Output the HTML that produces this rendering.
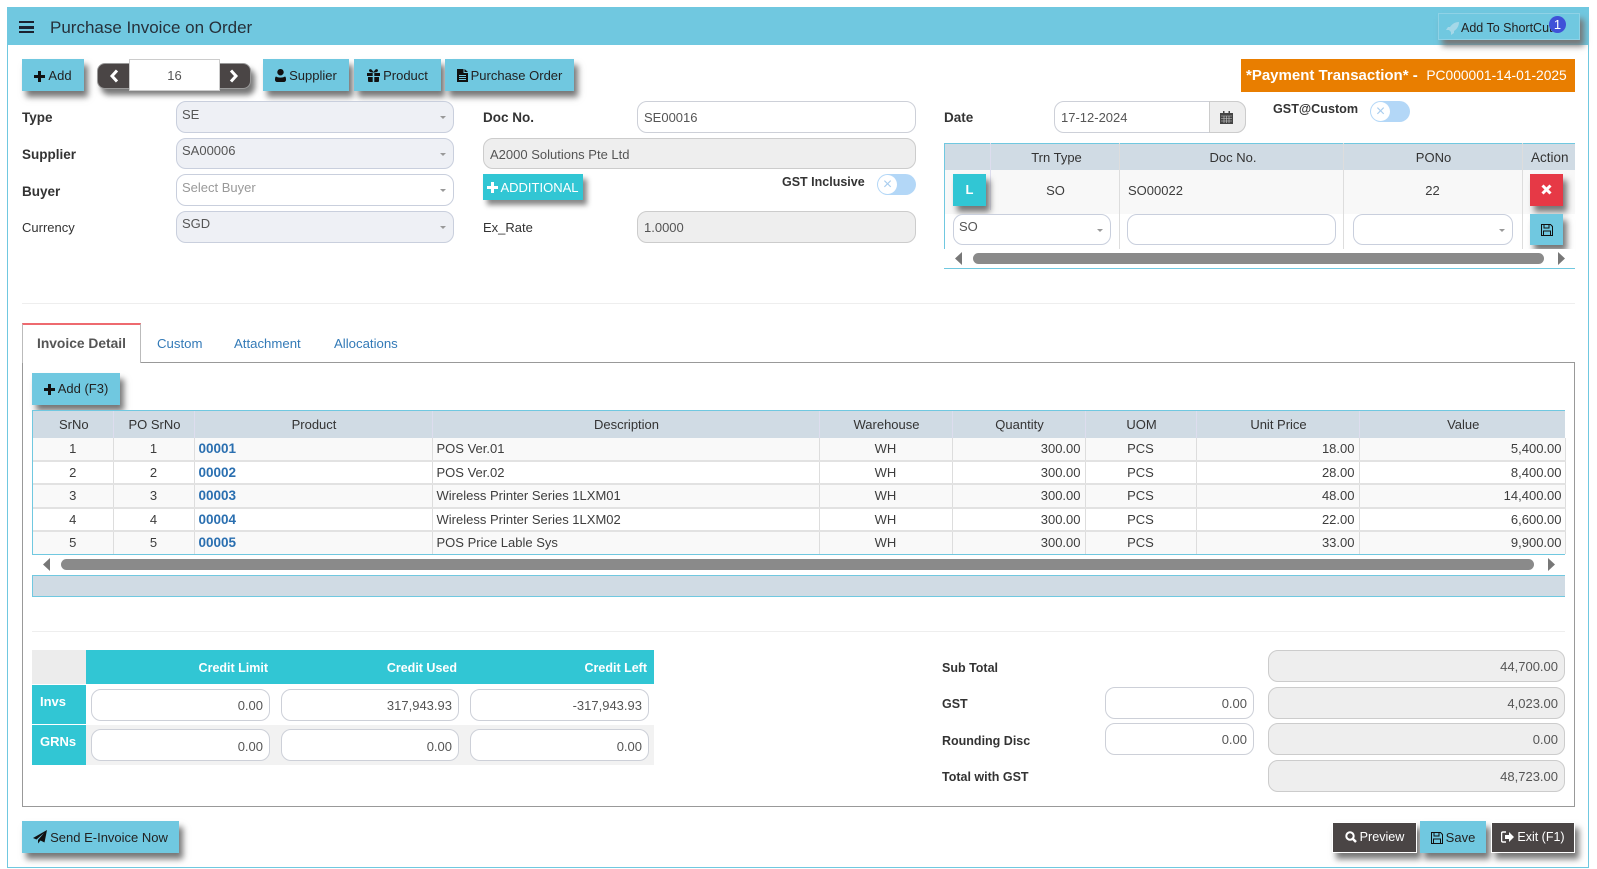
<!DOCTYPE html>
<html><head><meta charset="utf-8"><title>Purchase Invoice on Order</title>
<style>
*{box-sizing:border-box}
html,body{margin:0;padding:0;width:1597px;height:869px;overflow:hidden;background:#fff}
body{font-family:"Liberation Sans",sans-serif;font-size:13px;color:#3d3d3d;position:relative}
.a{position:absolute;white-space:nowrap}
.btn{position:absolute;background:#70c8e0;color:#222;height:32px;line-height:34px;text-align:center;font-size:13px;box-shadow:4px 6px 6px #777;white-space:nowrap}
.btn svg{vertical-align:-2px;margin-right:3px}
.dk{background:#4a4545;color:#fff;border:1px solid #fff}
.f{position:absolute;border:1px solid #cdd0d8;border-radius:10px;background:#fff;height:32px;line-height:32px;padding:0 6px;font-size:13px;color:#555;white-space:nowrap}
.s{background:#eef0f5;border-color:#c9cfdd;line-height:26px;padding-left:5px}
.s:after,.w:after{content:"";position:absolute;right:7px;top:14px;border:3px solid transparent;border-top:3px solid #999;border-bottom:0}
.w{line-height:26px;padding-left:5px;border-color:#c9cfdd}
.g{background:#eee;border-color:#ccc}
.r{text-align:right}
.b{font-weight:bold;color:#333;font-size:13.5px}
.l{height:20px;line-height:20px}
table{border-collapse:collapse;table-layout:fixed;position:absolute}
th{background:#d0dbe4;font-weight:normal;color:#333;border-right:1px solid #dde;font-size:13px;height:27px;padding:0 0 0 2px}
#g td{border-right:1px solid #ddd;border-bottom:2px solid #e2e2e2;padding:0 4px;font-size:13px;height:23px;color:#3d3d3d;line-height:20px}
#g tr:nth-child(even) td{background:#f9f9f9}
#g tr:last-child td{border-bottom:0}
#g td.ri{padding-right:3px}
#g td:nth-child(6),#g td:nth-child(8){padding-right:4px}
#g td:last-child{padding-right:3px}
.c{text-align:center}.ri{text-align:right}
#g td.c{padding:0}
#g a{color:#2a6fb0;font-weight:bold;font-size:13.5px}
.tab{position:absolute;top:334px;color:#337ab7;font-size:13.2px;line-height:20px}
.sh{box-shadow:4px 6px 6px #777}
.cr{font-weight:bold;color:#fff;font-size:12.5px;line-height:20px}
.t{color:#333;font-weight:bold;font-size:12.5px}
</style></head><body>
<!-- frame -->
<div class="a" style="left:7px;top:7px;width:1582px;height:861px;border:1px solid #70c8e0"></div>
<div class="a" style="left:7px;top:7px;width:1582px;height:38px;background:#70c8e0"></div>
<div class="a" style="left:19px;top:21px;width:15px;height:12px;border-top:2.5px solid #1c2230;border-bottom:2.5px solid #1c2230"></div>
<div class="a" style="left:19px;top:26px;width:15px;height:2.5px;background:#1c2230"></div>
<div class="a" style="left:50px;top:17px;line-height:22px;font-size:17px;color:#26303a">Purchase Invoice on Order</div>
<!-- shortcut -->
<div class="a sh" style="left:1438px;top:13px;width:142px;height:27px;background:#70c8e0;border:1px solid #8fd2e6"></div>
<svg class="a" style="left:1446px;top:21px" width="14" height="14" viewBox="0 0 14 14"><path d="M13 1C9 1 6 3 4 6L2 6 0 9l3 0 2 2 0 3 3-2 0-2c3-2 5-5 5-9zM10 3a1 1 0 1 0 .1 0z" fill="#a5d8e8"/></svg>
<div class="a" style="left:1461px;top:18px;line-height:20px;font-size:12.5px;color:#222">Add To ShortCut</div>
<div class="a" style="left:1549px;top:16px;width:17px;height:17px;border-radius:50%;background:#3f51d8;color:#fff;text-align:center;line-height:17px;font-size:13px">1</div>
<!-- top buttons -->
<div class="btn" style="left:22px;top:59px;width:62px"><svg width="11" height="11" viewBox="0 0 11 11"><path d="M4 0h3v4h4v3H7v4H4V7H0V4h4z" fill="#111"/></svg>Add</div>
<div class="a sh" style="left:97px;top:63px;width:154px;height:26px;background:#4a4545;border-radius:8px;border:1px solid #999"></div>
<svg class="a" style="left:109px;top:69px" width="10" height="14" viewBox="0 0 10 14"><path d="M8 1.500 3 7l5 5.500" fill="none" stroke="#fff" stroke-width="3"/></svg>
<svg class="a" style="left:229px;top:69px" width="10" height="14" viewBox="0 0 10 14"><path d="M2 1.500 7 7l-5 5.500" fill="none" stroke="#fff" stroke-width="3"/></svg>
<div class="a c" style="left:129px;top:59px;width:91px;height:32px;background:#fff;border:1px solid #ccc;line-height:32px;color:#555">16</div>
<div class="btn" style="left:263px;top:59px;width:86px"><svg width="11" height="13" viewBox="0 0 11 13"><path d="M5.500 0a3.200 3.200 0 1 1-.01 0zM1 7.500c2.500 1.500 6.500 1.500 9 0 1 .5 1 2 1 3.500 0 1-1 2-2 2H2c-1 0-2-1-2-2 0-1.500 0-3 1-3.500z" fill="#111"/></svg>Supplier</div>
<div class="btn" style="left:354px;top:59px;width:87px"><svg width="13" height="13" viewBox="0 0 13 13"><path d="M0 4h5.700v3H0zM7.300 4H13v3H7.300zM1 8h4.700v5H2a1 1 0 0 1-1-1zM7.300 8H12v4a1 1 0 0 1-1 1H7.300zM6.500 3.500C4 3.500 2 3 2 1.500 2 .3 3.500-.3 4.500.5L6.500 3l2-2.500c1-.8 2.500-.2 2.500 1C11 3 9 3.500 6.500 3.500z" fill="#111"/></svg>Product</div>
<div class="btn" style="left:445px;top:59px;width:129px"><svg width="11" height="13" viewBox="0 0 11 13"><path d="M0 0h6.500v4H11v9H0zM7.500 0 11 3H7.500zM2 6v1h7V6zM2 8v1h7V8zM2 10v1h7v-1z" fill="#111" fill-rule="evenodd"/></svg>Purchase Order</div>
<!-- orange -->
<div class="a" style="left:1241px;top:59px;width:334px;height:33px;background:#e97e00;color:#fff;line-height:34px;padding-left:5px"><span style="font-weight:bold;font-size:15px">*Payment Transaction* -</span> <span style="font-size:13.8px;margin-left:5px">PC000001-14-01-2025</span></div>
<!-- left form -->
<div class="a l b" style="left:22px;top:108px">Type</div>
<div class="a l b" style="left:22px;top:145px">Supplier</div>
<div class="a l b" style="left:22px;top:182px">Buyer</div>
<div class="a l" style="left:22px;top:218px;color:#333">Currency</div>
<div class="f s" style="left:176px;top:101px;width:278px">SE</div>
<div class="f s" style="left:176px;top:138px;width:278px;height:31px;line-height:24px">SA00006</div>
<div class="f w" style="left:176px;top:174px;width:278px;color:#999">Select Buyer</div>
<div class="f s" style="left:176px;top:211px;width:278px;line-height:24px">SGD</div>
<div class="a l b" style="left:483px;top:108px">Doc No.</div>
<div class="f" style="left:637px;top:101px;width:279px">SE00016</div>
<div class="f g" style="left:483px;top:138px;width:433px;height:31px;line-height:31px">A2000 Solutions Pte Ltd</div>
<div class="a c" style="left:483px;top:174px;width:100px;height:26px;line-height:27px;background:#31c6d4;color:#fff;box-shadow:4px 5px 5px #888"><svg width="11" height="11" viewBox="0 0 11 11" style="vertical-align:-1px;margin-right:2px"><path d="M4 0h3v4h4v3H7v4H4V7H0V4h4z" fill="#fff"/></svg>ADDITIONAL</div>
<div class="a l b" style="left:782px;top:172px;font-size:12.5px">GST Inclusive</div>
<div class="a" style="left:877px;top:174px;width:39px;height:21px;background:#b3d7f7;border-radius:11px"></div>
<div class="a c" style="left:878px;top:175px;width:19px;height:19px;background:#fff;border-radius:50%;color:#a9cdee;line-height:19px;font-size:16px">×</div>
<div class="a l" style="left:483px;top:218px;color:#333">Ex_Rate</div>
<div class="f g" style="left:637px;top:211px;width:279px">1.0000</div>
<!-- date -->
<div class="a l b" style="left:944px;top:108px">Date</div>
<div class="f" style="left:1054px;top:101px;width:192px">17-12-2024</div>
<div class="a" style="left:1209px;top:101px;width:37px;height:32px;background:#eee;border:1px solid #ccc;border-radius:0 10px 10px 0"></div>
<svg class="a" style="left:1220px;top:111px" width="13" height="13" viewBox="0 0 13 13"><path d="M0 2h13v11H0zM3 0h1.500v3H3zM8.500 0H10v3H8.500z" fill="#444"/><path d="M1 5h11M1 7.500h11M1 10h11M4 5v7M6.500 5v7M9 5v7" stroke="#ccc" stroke-width=".6"/></svg>
<div class="a l b" style="left:1273px;top:99px;font-size:12.6px">GST@Custom</div>
<div class="a" style="left:1370px;top:101px;width:40px;height:21px;background:#b3d7f7;border-radius:11px"></div>
<div class="a c" style="left:1371px;top:102px;width:19px;height:19px;background:#fff;border-radius:50%;color:#a9cdee;line-height:19px;font-size:16px">×</div>
<!-- upper table -->
<div class="a" style="left:944px;top:143px;width:631px;height:27px;background:#d0dbe4;border-top:1px solid #70c8e0;border-left:1px solid #70c8e0"></div>
<div class="a" style="left:944px;top:170px;width:631px;height:79px;background:linear-gradient(#f8f8f8 0,#f8f8f8 44px,#fff 44px);border-left:1px solid #70c8e0"></div>
<div class="a" style="left:990px;top:143px;width:1px;height:67px;background:#dde"></div>
<div class="a" style="left:1119px;top:143px;width:1px;height:106px;background:#ddd"></div>
<div class="a" style="left:1343px;top:143px;width:1px;height:106px;background:#ddd"></div>
<div class="a" style="left:1522px;top:143px;width:1px;height:106px;background:#ddd"></div>
<div class="a c" style="left:992px;top:148px;width:129px;color:#333;line-height:20px">Trn Type</div>
<div class="a c" style="left:1121px;top:148px;width:224px;color:#333;line-height:20px">Doc No.</div>
<div class="a c" style="left:1344px;top:148px;width:179px;color:#333;line-height:20px">PONo</div>
<div class="a" style="left:1531px;top:148px;color:#333;line-height:20px;font-size:13.5px">Action</div>
<div class="a c sh" style="left:953px;top:174px;width:33px;height:32px;background:#31c6d4;color:#fff;font-weight:bold;line-height:31px">L</div>
<div class="a c" style="left:991px;top:181px;width:129px;line-height:20px">SO</div>
<div class="a" style="left:1128px;top:181px;line-height:20px">SO00022</div>
<div class="a c" style="left:1343px;top:181px;width:179px;line-height:20px">22</div>
<div class="a sh" style="left:1530px;top:174px;width:33px;height:32px;background:#e63946"></div>
<svg class="a" style="left:1541px;top:184px" width="11" height="11" viewBox="0 0 11 11"><path d="M1.500 1.500l8 8M9.500 1.500l-8 8" stroke="#fff" stroke-width="3"/></svg>
<div class="f w" style="left:953px;top:214px;width:158px;height:31px;line-height:24px">SO</div>
<div class="f" style="left:1127px;top:214px;width:209px;height:31px;border-color:#c9cfdd"></div>
<div class="f w" style="left:1353px;top:214px;width:160px;height:31px"></div>
<div class="a sh" style="left:1530px;top:214px;width:33px;height:31px;background:#70c8e0"></div>
<svg class="a" style="left:1541px;top:224px" width="12" height="12" viewBox="0 0 12 12"><path d="M.5.500h9l2 2v9H.5zM3 .5v3.500h5V.5M2.500 11.500V7h7v4.500" fill="none" stroke="#111"/></svg>
<div class="a" style="left:944px;top:249px;width:631px;height:20px;background:#fff;border-bottom:1px solid #70c8e0"></div>
<div class="a" style="left:973px;top:253px;width:571px;height:11px;background:#8a8a8a;border-radius:6px"></div>
<svg class="a" style="left:955px;top:252px" width="8" height="13"><path d="M7 0v13L0 6.500z" fill="#777"/></svg>
<svg class="a" style="left:1557px;top:252px" width="8" height="13"><path d="M1 0v13l7-6.500z" fill="#777"/></svg>
<div class="a" style="left:22px;top:303px;width:1553px;height:1px;background:#eee"></div>
<!-- tabs -->
<div class="a" style="left:22px;top:362px;width:1553px;height:445px;border:1px solid #999"></div>
<div class="a" style="left:22px;top:323px;width:119px;height:40px;background:#fff;border:1px solid #bbb;border-top:2px solid #ee6a6f;border-bottom:0"></div>
<div class="a" style="left:37px;top:334px;line-height:20px;color:#555;font-weight:bold;font-size:13.8px">Invoice Detail</div>
<div class="tab" style="left:157px">Custom</div>
<div class="tab" style="left:234px">Attachment</div>
<div class="tab" style="left:334px">Allocations</div>
<div class="btn" style="left:32px;top:373px;width:88px;line-height:32px"><svg width="11" height="11" viewBox="0 0 11 11"><path d="M4 0h3v4h4v3H7v4H4V7H0V4h4z" fill="#111"/></svg>Add (F3)</div>
<!-- grid -->
<div class="a" style="left:32px;top:410px;width:1533px;height:145px;border-top:1px solid #70c8e0;border-bottom:1px solid #70c8e0;border-left:1px solid #70c8e0"></div>
<table id="g" style="left:33px;top:411px;width:1532px">
<colgroup><col style="width:80px"><col style="width:81px"><col style="width:238px"><col style="width:387px"><col style="width:133px"><col style="width:133px"><col style="width:111px"><col style="width:163px"><col style="width:206px"></colgroup>
<tr><th>SrNo</th><th>PO SrNo</th><th>Product</th><th>Description</th><th>Warehouse</th><th>Quantity</th><th>UOM</th><th>Unit Price</th><th style="border:0">Value</th></tr>
<tr><td class="c">1</td><td class="c">1</td><td><a>00001</a></td><td>POS Ver.01</td><td class="c">WH</td><td class="ri">300.00</td><td class="c">PCS</td><td class="ri">18.00</td><td class="ri">5,400.00</td></tr>
<tr><td class="c">2</td><td class="c">2</td><td><a>00002</a></td><td>POS Ver.02</td><td class="c">WH</td><td class="ri">300.00</td><td class="c">PCS</td><td class="ri">28.00</td><td class="ri">8,400.00</td></tr>
<tr><td class="c" style="height:24px">3</td><td class="c">3</td><td><a>00003</a></td><td>Wireless Printer Series 1LXM01</td><td class="c">WH</td><td class="ri">300.00</td><td class="c">PCS</td><td class="ri">48.00</td><td class="ri">14,400.00</td></tr>
<tr><td class="c">4</td><td class="c">4</td><td><a>00004</a></td><td>Wireless Printer Series 1LXM02</td><td class="c">WH</td><td class="ri">300.00</td><td class="c">PCS</td><td class="ri">22.00</td><td class="ri">6,600.00</td></tr>
<tr><td class="c">5</td><td class="c">5</td><td><a>00005</a></td><td>POS Price Lable Sys</td><td class="c">WH</td><td class="ri">300.00</td><td class="c">PCS</td><td class="ri">33.00</td><td class="ri">9,900.00</td></tr>
</table>
<div class="a" style="left:61px;top:559px;width:1473px;height:11px;background:#8a8a8a;border-radius:6px"></div>
<svg class="a" style="left:43px;top:558px" width="8" height="13"><path d="M7 0v13L0 6.500z" fill="#777"/></svg>
<svg class="a" style="left:1547px;top:558px" width="8" height="13"><path d="M1 0v13l7-6.500z" fill="#777"/></svg>
<div class="a" style="left:32px;top:575px;width:1533px;height:22px;background:#d0dbe4;border:1px solid #70c8e0;border-right:0"></div>
<div class="a" style="left:32px;top:631px;width:1533px;height:1px;background:#eee"></div>
<!-- credit -->
<div class="a" style="left:32px;top:650px;width:54px;height:34px;background:#ececec"></div>
<div class="a" style="left:86px;top:650px;width:568px;height:34px;background:#31c6d4"></div>
<div class="a ri cr" style="left:100px;top:658px;width:168px">Credit Limit</div>
<div class="a ri cr" style="left:300px;top:658px;width:157px">Credit Used</div>
<div class="a ri cr" style="left:490px;top:658px;width:157px">Credit Left</div>
<div class="a" style="left:32px;top:685px;width:54px;height:39px;background:#31c6d4;color:#fff;font-weight:bold;padding:7px 8px;line-height:20px">Invs</div>
<div class="a" style="left:32px;top:725px;width:54px;height:40px;background:#31c6d4;color:#fff;font-weight:bold;padding:7px 8px;line-height:20px">GRNs</div>
<div class="a" style="left:86px;top:725px;width:568px;height:40px;background:#f2f2f2"></div>
<div class="f r" style="left:91px;top:689px;width:179px">0.00</div>
<div class="f r" style="left:281px;top:689px;width:178px">317,943.93</div>
<div class="f r" style="left:470px;top:689px;width:179px">-317,943.93</div>
<div class="f r" style="left:91px;top:729px;width:179px;line-height:33px">0.00</div>
<div class="f r" style="left:281px;top:729px;width:178px;line-height:33px">0.00</div>
<div class="f r" style="left:470px;top:729px;width:179px;line-height:33px">0.00</div>
<!-- totals -->
<div class="a l t" style="left:942px;top:658px">Sub Total</div>
<div class="a l t" style="left:942px;top:694px">GST</div>
<div class="a l t" style="left:942px;top:731px">Rounding Disc</div>
<div class="a l t" style="left:942px;top:767px">Total with GST</div>
<div class="f r" style="left:1105px;top:687px;width:149px">0.00</div>
<div class="f r" style="left:1105px;top:723px;width:149px">0.00</div>
<div class="f g r" style="left:1268px;top:650px;width:297px">44,700.00</div>
<div class="f g r" style="left:1268px;top:687px;width:297px">4,023.00</div>
<div class="f g r" style="left:1268px;top:723px;width:297px">0.00</div>
<div class="f g r" style="left:1268px;top:760px;width:297px">48,723.00</div>
<!-- bottom buttons -->
<div class="btn" style="left:22px;top:821px;width:157px"><svg width="14" height="14" viewBox="0 0 14 14"><path d="M14 0 11.500 12.500 7.500 10.500 5 13.500V10L11 3 3.500 9.500 0 8z" fill="#111"/></svg>Send E-Invoice Now</div>
<div class="btn dk" style="left:1332px;top:822px;width:85px;height:31px;line-height:29px;font-size:12.6px"><svg width="12" height="12" viewBox="0 0 12 12"><circle cx="5" cy="5" r="3.700" fill="none" stroke="#fff" stroke-width="2"/><path d="M8 8l3 3" stroke="#fff" stroke-width="2.500"/></svg>Preview</div>
<div class="btn" style="left:1420px;top:821px;width:66px"><svg width="12" height="12" viewBox="0 0 12 12"><path d="M.5.500h9l2 2v9H.5zM3 .5v3.500h5V.5M2.500 11.500V7h7v4.500" fill="none" stroke="#111"/></svg>Save</div>
<div class="btn dk" style="left:1491px;top:822px;width:84px;height:31px;line-height:29px;font-size:12.5px"><svg width="13" height="12" viewBox="0 0 13 12"><path d="M5 1H2a1.500 1.500 0 0 0-1.500 1.500v7A1.500 1.500 0 0 0 2 11h3" fill="none" stroke="#fff" stroke-width="1.500"/><path d="M4 4h4V1l5 5-5 5V8H4z" fill="#fff"/></svg>Exit (F1)</div>
</body></html>
